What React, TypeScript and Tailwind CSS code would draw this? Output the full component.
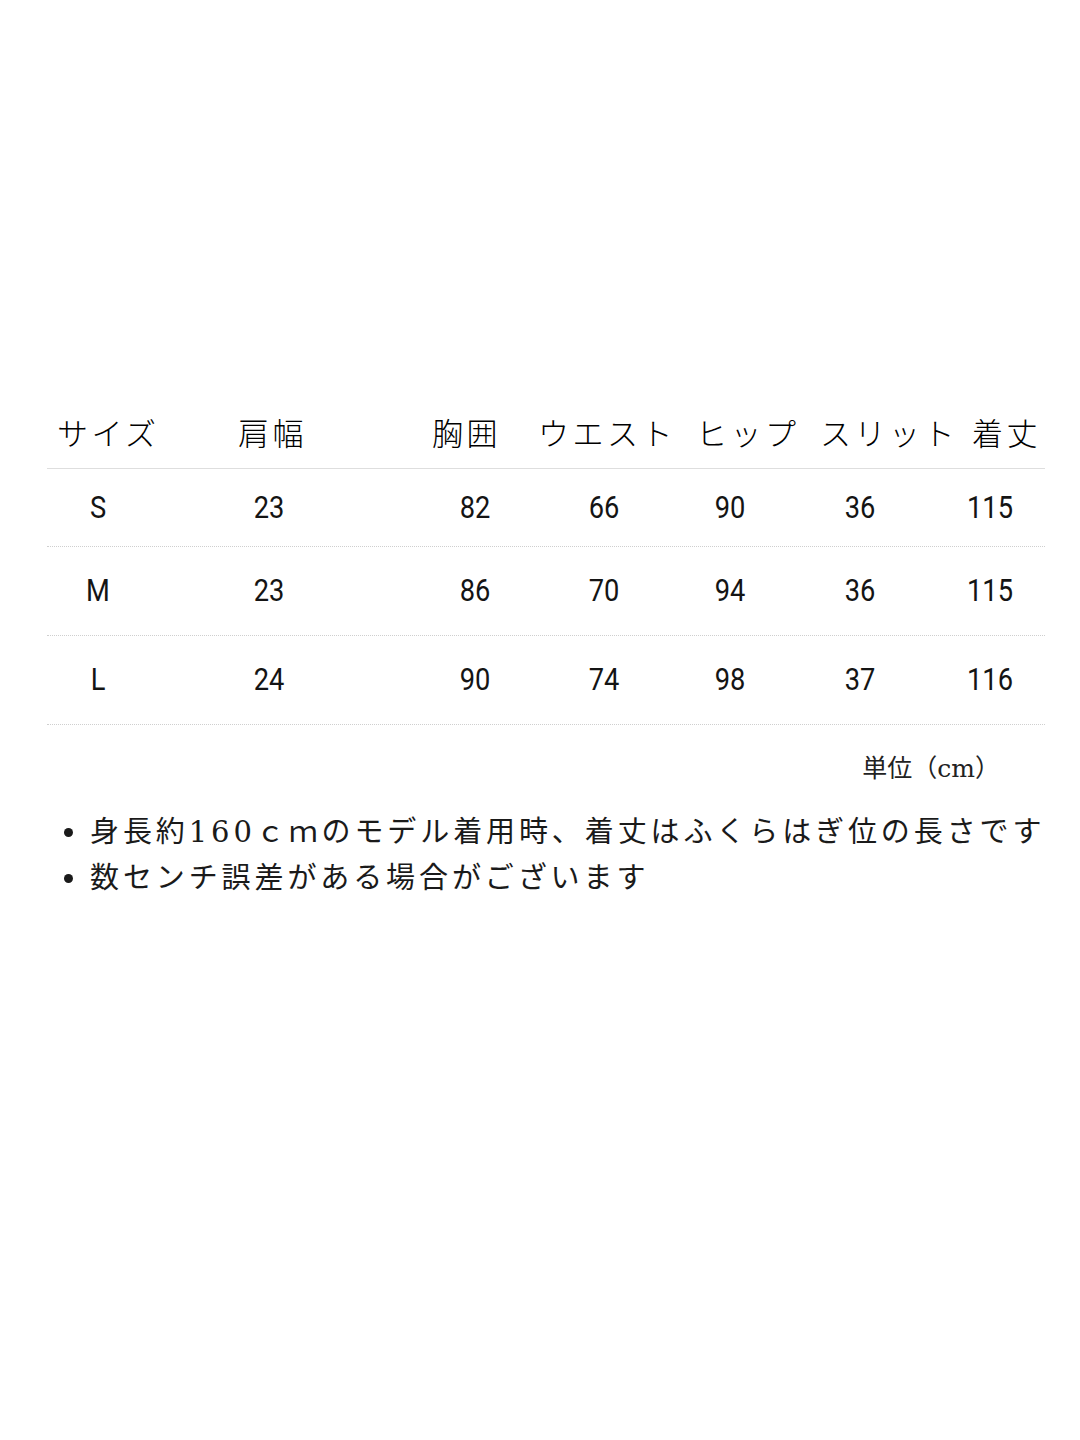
import React from 'react';

const HEAD = [
  { label: 'サイズ', w: 'w-[181px]' },
  { label: '肩幅', w: 'w-[194px]' },
  { label: '胸囲', w: 'w-[106px]' },
  { label: 'ウエスト', w: 'w-[158px]' },
  { label: 'ヒップ', w: 'w-[124px]' },
  { label: 'スリット', w: 'w-[152px]' },
  { label: '着丈', w: 'w-[80px]' },
];

const COLS = ['w-[102px]', 'w-[240px]', 'w-[172px]', 'w-[86px]', 'w-[166px]', 'w-[94px]', 'w-[166px]'];

const ROWS = [
  { h: 'h-[78px]', cells: ['S', '23', '82', '66', '90', '36', '115'] },
  { h: 'h-[89px]', cells: ['M', '23', '86', '70', '94', '36', '115'] },
  { h: 'h-[89px]', cells: ['L', '24', '90', '74', '98', '37', '116'] },
];

const JP = "font-['DejaVu_Serif','Noto_Sans_CJK_JP',serif]";

export default function App() {
  return (
    <div className="min-h-[1440px] w-[1080px] bg-white text-[#1a1a1a] pt-[400px]">
      <div className="mx-[47px] w-[998px]">
        {/* header */}
        <div className="flex h-[69px] items-center border-b border-[#dedede] pl-[10px] pb-[4px] font-['Noto_Sans_CJK_JP',sans-serif] font-light text-[31px] tracking-[3.5px] text-[#000]">
          {HEAD.map((c) => (
            <div key={c.label} className={`${c.w} shrink-0 whitespace-nowrap`}>{c.label}</div>
          ))}
        </div>

        {ROWS.map((r) => (
          <div key={r.cells[0]} className={`flex ${r.h} items-center border-b border-dotted border-[#cfcfcf]`}>
            {r.cells.map((v, i) => (
              <div key={i} className={`${COLS[i]} shrink-0 text-center font-['Roboto',sans-serif] text-[29px] text-[#141414] scale-y-[1.08] scale-x-[0.94]`}>
                {v}
              </div>
            ))}
          </div>
        ))}

        <div className={`flex justify-end pr-[45px] pt-[26px] ${JP} text-[25px] leading-[36px] text-[#222]`}>
          単位（cm）
        </div>

        <ul className={`mt-[22px] ${JP} text-[29px] leading-[46px] tracking-[3.9px] text-[#1a1a1a]`}>
          <li className="flex items-center whitespace-nowrap">
            <span className="ml-[17px] mr-[17px] h-[9px] w-[9px] shrink-0 rounded-full bg-[#1a1a1a]" />
            身長約160ｃｍのモデル着用時、着丈はふくらはぎ位の長さです
          </li>
          <li className="flex items-center whitespace-nowrap">
            <span className="ml-[17px] mr-[17px] h-[9px] w-[9px] shrink-0 rounded-full bg-[#1a1a1a]" />
            数センチ誤差がある場合がございます
          </li>
        </ul>
      </div>
    </div>
  );
}
